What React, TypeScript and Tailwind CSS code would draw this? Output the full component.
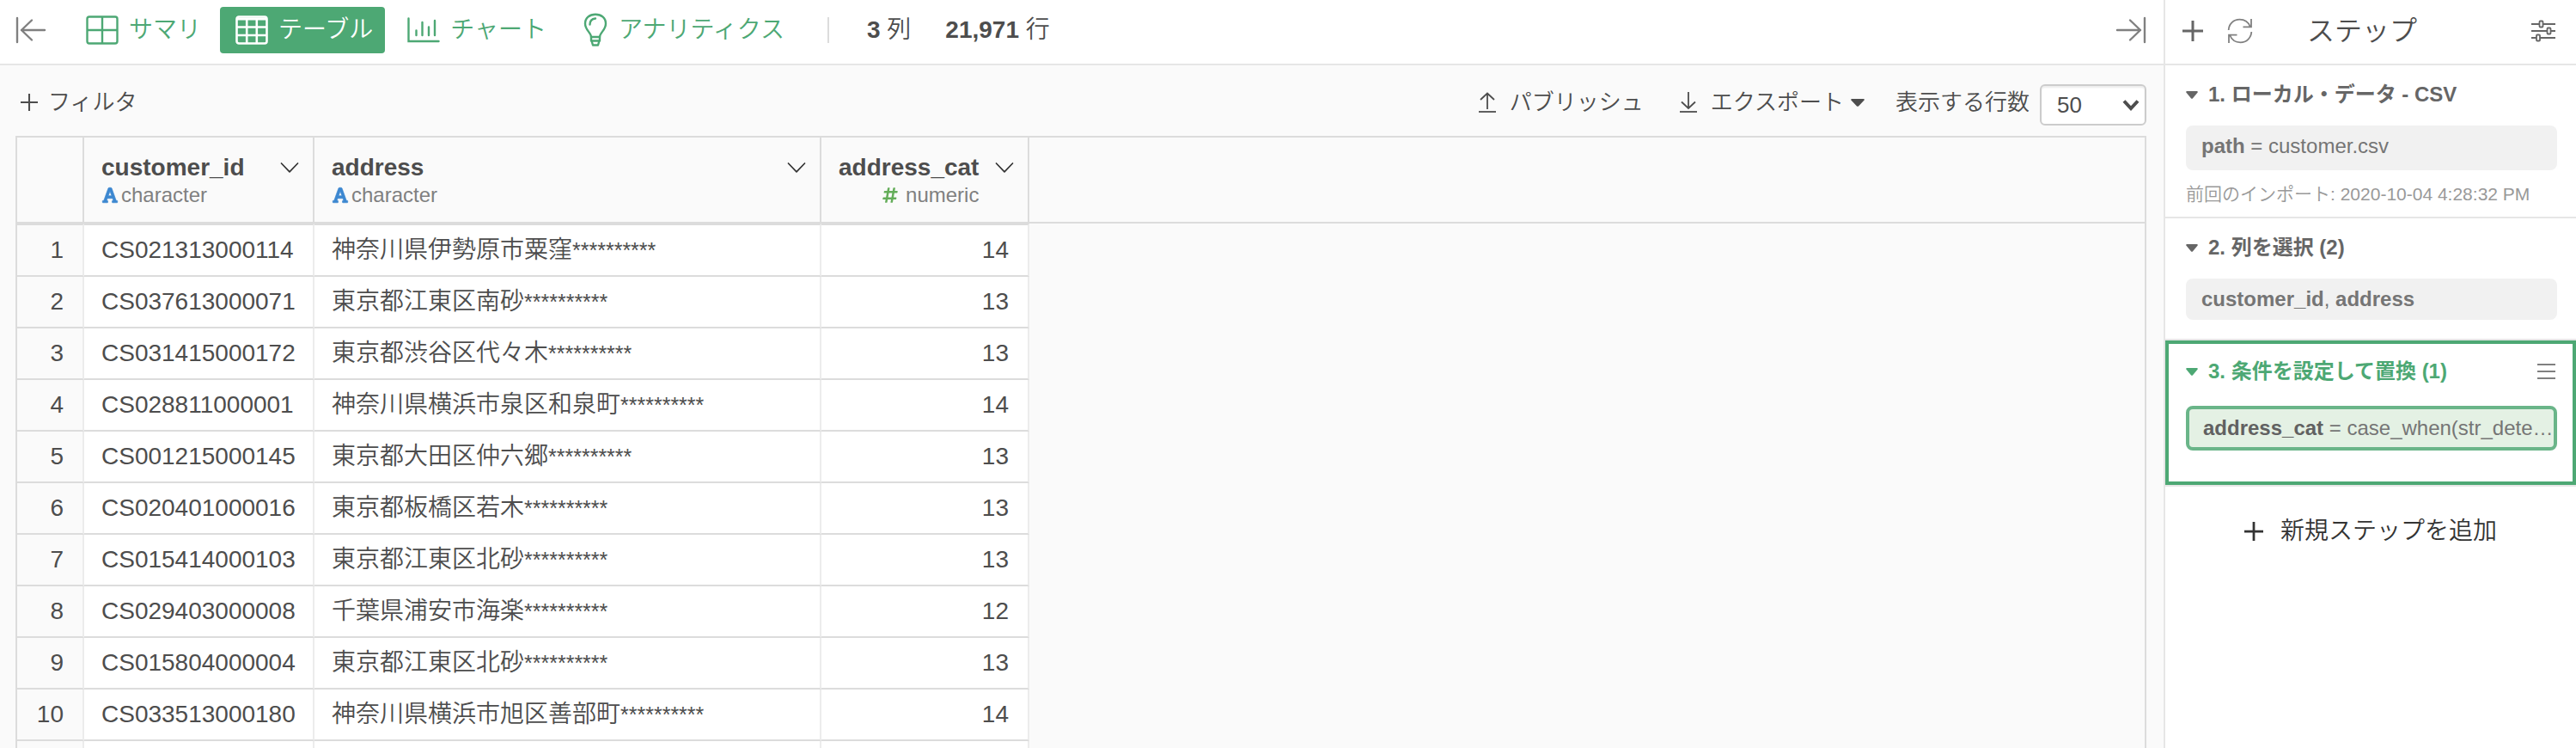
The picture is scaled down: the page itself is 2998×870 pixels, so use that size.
import type { ReactNode } from 'react';
import { FaFont, FaHashtag } from 'react-icons/fa';

type Row = { id: string; address: string; cat: number };

const MASK = '**********';

const rows: Row[] = [
  { id: 'CS021313000114', address: '神奈川県伊勢原市粟窪', cat: 14 },
  { id: 'CS037613000071', address: '東京都江東区南砂', cat: 13 },
  { id: 'CS031415000172', address: '東京都渋谷区代々木', cat: 13 },
  { id: 'CS028811000001', address: '神奈川県横浜市泉区和泉町', cat: 14 },
  { id: 'CS001215000145', address: '東京都大田区仲六郷', cat: 13 },
  { id: 'CS020401000016', address: '東京都板橋区若木', cat: 13 },
  { id: 'CS015414000103', address: '東京都江東区北砂', cat: 13 },
  { id: 'CS029403000008', address: '千葉県浦安市海楽', cat: 12 },
  { id: 'CS015804000004', address: '東京都江東区北砂', cat: 13 },
  { id: 'CS033513000180', address: '神奈川県横浜市旭区善部町', cat: 14 },
];

function CollapseIcon({ flip = false }: { flip?: boolean }) {
  return (
    <svg
      width="36"
      height="32"
      viewBox="0 0 36 32"
      fill="none"
      stroke="#808080"
      strokeWidth="2.4"
      strokeLinecap="round"
      strokeLinejoin="round"
      className={flip ? 'rotate-180' : ''}
      aria-hidden="true"
    >
      <path d="M2 2v28M7 16h27M19 4.500L7 16l12 11.500" />
    </svg>
  );
}

function SummaryIcon() {
  return (
    <svg width="38" height="34" viewBox="0 0 38 34" fill="none" stroke="currentColor" strokeWidth="2.400" aria-hidden="true">
      <rect x="1.500" y="1.500" width="35" height="31" rx="2.500" />
      <path d="M19 1.500v31M1.500 17h35" />
    </svg>
  );
}

function TableIcon() {
  return (
    <svg width="38" height="34" viewBox="0 0 38 34" fill="none" stroke="currentColor" strokeWidth="2.600" aria-hidden="true">
      <rect x="1.500" y="1.500" width="35" height="31" rx="2.500" />
      <path d="M1.500 4h35" strokeWidth="3" />
      <path d="M13.200 4v29M24.800 4v29M1.500 13.500h35M1.500 23h35" />
    </svg>
  );
}

function ChartIcon() {
  return (
    <svg width="38" height="30" viewBox="0 0 38 30" fill="none" stroke="currentColor" strokeWidth="2.400" strokeLinecap="round" aria-hidden="true">
      <path d="M1.500 1.500v26.500h35M10.500 15.500v5.500M17.500 6v15M25 11.500v9.500M32 4v17" />
    </svg>
  );
}

function BulbIcon() {
  return (
    <svg width="32" height="40" viewBox="0 0 32 40" fill="none" stroke="currentColor" strokeWidth="2.400" strokeLinejoin="round" strokeLinecap="round" aria-hidden="true">
      <path d="M12 28c0-5-7-8-7-15.500C5 6 10 1.700 17 1.700S29 6 29 12.500C29 20 22 23 22 28z" />
      <path d="M12 28v4.500h10V28M12.500 32.500l1.500 5h6l1.500-5M10.500 13.500c0-4 2.500-6.500 6.500-7" />
    </svg>
  );
}

function PlusIcon({ size, weight }: { size: number; weight: number }) {
  return (
    <svg width={size} height={size} viewBox="0 0 24 24" fill="none" stroke="currentColor" strokeWidth={weight} aria-hidden="true">
      <path d="M12 0v24M0 12h24" />
    </svg>
  );
}

function ArrowIcon({ down = false }: { down?: boolean }) {
  return (
    <svg width="20" height="24" viewBox="0 0 20 24" fill="none" stroke="currentColor" strokeWidth="1.800" aria-hidden="true">
      {down ? <path d="M10 0v19M2 11.500l8 7.500 8-7.500" /> : <path d="M10 20V1.500M2 9l8-7.500L18 9" />}
      <path d="M0 23h20" />
    </svg>
  );
}

function Caret({ width }: { width: number }) {
  return (
    <svg width={width} height="9" viewBox="0 0 16 9" preserveAspectRatio="none" fill="currentColor" aria-hidden="true">
      <path d="M1.300 0h13.400c1 0 1.400 1 .7 1.800L9 8.400c-.6.600-1.400.6-2 0L.6 1.800C-.1 1 .3 0 1.300 0z" />
    </svg>
  );
}

function ChevronIcon() {
  return (
    <svg width="22" height="12" viewBox="0 0 22 12" fill="none" stroke="#333333" strokeWidth="1.700" strokeLinecap="round" strokeLinejoin="round" aria-hidden="true">
      <path d="M1.500 1L11 10.800 20.500 1" />
    </svg>
  );
}

function RefreshIcon() {
  return (
    <svg width="30" height="30" viewBox="0 0 30 30" fill="none" stroke="#808080" strokeWidth="1.800" aria-hidden="true">
      <path d="M1.700 14C2 7 7.500 1.700 14.500 1.700c5.500 0 10.300 3.300 12.300 8.300M28 1v9.300h-9.500M28.300 16C28 23 22.500 28.300 15.500 28.300 10 28.300 5.200 25 3.200 20M2 29v-9.300h9.500" />
    </svg>
  );
}

function SlidersIcon() {
  return (
    <svg width="28" height="26" viewBox="0 0 28 26" fill="none" stroke="#666666" strokeWidth="1.800" aria-hidden="true">
      <path d="M0 5h9.500M13.500 5H28M0 13h18.500M22.500 13H28M0 21h6M10 21h18" />
      <rect x="9.500" y="1.500" width="4" height="7" rx="1" />
      <rect x="18.500" y="9.500" width="4" height="7" rx="1" />
      <rect x="6" y="17.500" width="4" height="7" rx="1" />
    </svg>
  );
}

function Tab({ icon, label, active = false }: { icon: ReactNode; label: string; active?: boolean }) {
  return (
    <button
      type="button"
      aria-pressed={active}
      className={
        active
          ? 'flex h-[54px] items-center gap-3 rounded bg-[#4da874] pr-3.5 pl-[18px] text-white'
          : 'flex h-[54px] items-center gap-3 rounded pr-3.5 pl-[18px] text-[#4da874]'
      }
    >
      {icon}
      <span>{label}</span>
    </button>
  );
}

function ColumnHeader({ name, type }: { name: string; type: 'character' | 'numeric' }) {
  const numeric = type === 'numeric';
  return (
    <th scope="col" className="border-r-2 border-b-2 border-[#dcdcdc] p-0 pt-0.5 font-normal">
      <div className="flex items-start justify-between pr-4 pl-5">
        <div className={numeric ? 'flex flex-col items-end gap-0.5' : 'flex flex-col items-start gap-0.5'}>
          <span className="text-[28px] leading-8 font-bold">{name}</span>
          <span className={numeric ? 'flex items-center gap-2 text-2xl leading-7 text-[#808080]' : 'flex items-center gap-[3px] text-2xl leading-7 text-[#808080]'}>
            {numeric ? (
              <FaHashtag className="size-5 text-[#64ad59]" />
            ) : (
              <FaFont className="size-5 stroke-[#3c87d0] stroke-[16px] text-[#3c87d0]" />
            )}
            {type}
          </span>
        </div>
        <button type="button" aria-label={`${name} のメニュー`} className="flex h-8 items-center">
          <ChevronIcon />
        </button>
      </div>
    </th>
  );
}

function DataTable() {
  return (
    <table className="w-full table-fixed border-separate border-spacing-0">
      <colgroup>
        <col className="w-[78px]" />
        <col className="w-[268px]" />
        <col className="w-[590px]" />
        <col className="w-[242px]" />
        <col />
      </colgroup>
      <thead>
        <tr className="h-[100px]">
          <td className="border-r-2 border-b-2 border-[#dcdcdc]" />
          <ColumnHeader name="customer_id" type="character" />
          <ColumnHeader name="address" type="character" />
          <ColumnHeader name="address_cat" type="numeric" />
          <td className="border-b-2 border-[#dcdcdc]" />
        </tr>
      </thead>
      <tbody className="[&>tr:first-child>*]:border-t-2 [&>tr:first-child]:h-[62px]">
        {rows.map((row, i) => (
          <tr key={row.id} className="h-[60px]">
            <th scope="row" className="border-r-2 border-b-2 border-[#dcdcdc] border-r-[#ececec] p-0 pr-[22px] text-right font-normal">
              {i + 1}
            </th>
            <td className="border-r-2 border-b-2 border-[#dcdcdc] border-r-[#ececec] bg-white p-0 pl-5">{row.id}</td>
            <td className="border-r-2 border-b-2 border-[#dcdcdc] border-r-[#ececec] bg-white p-0 pl-5">
              {row.address}
              <span className="text-[25px] leading-none">{MASK}</span>
            </td>
            <td className="border-r-2 border-b-2 border-[#dcdcdc] border-r-[#ececec] bg-white p-0 pr-[22px] text-right">{row.cat}</td>
            <td className="border-[#fafafa]" />
          </tr>
        ))}
        <tr className="h-[60px]">
          <td className="border-r-2 border-[#ececec]" />
          <td className="border-r-2 border-[#ececec] bg-white" />
          <td className="border-r-2 border-[#ececec] bg-white" />
          <td className="border-r-2 border-[#ececec] bg-white" />
          <td />
        </tr>
      </tbody>
    </table>
  );
}

function StepTitle({ children }: { children: ReactNode }) {
  return (
    <h3 className="flex h-9 items-center gap-3 font-bold">
      <Caret width={14} />
      <span>{children}</span>
    </h3>
  );
}

function StepsPanel() {
  return (
    <aside className="w-[480px] shrink-0 border-l-2 border-[#e6e6e6] bg-white text-2xl text-[#666666]">
      <header className="flex h-[76px] items-center border-b-2 border-[#e6e6e6] px-5 pb-0.5">
        <div className="flex flex-1 items-center gap-7">
          <button type="button" aria-label="追加">
            <PlusIcon size={24} weight={3} />
          </button>
          <button type="button" aria-label="更新">
            <RefreshIcon />
          </button>
        </div>
        <h2 className="mr-4 text-[32px] leading-10 text-[#4d4d4d]">ステップ</h2>
        <div className="flex flex-1 justify-end pr-1">
          <button type="button" aria-label="設定">
            <SlidersIcon />
          </button>
        </div>
      </header>

      <section className="border-b-2 border-[#e6e6e6] pt-4 pr-[22px] pb-3.5 pl-6">
        <StepTitle>1. ローカル・データ - CSV</StepTitle>
        <div className="mt-[18px] rounded-lg bg-[#f1f1f1] px-[18px] pt-2 pb-3 leading-8 text-[#757575]">
          <b className="font-bold">path</b> = customer.csv
        </div>
        <p className="mt-4 text-[21px] leading-6 text-[#999999]">前回のインポート: 2020-10-04 4:28:32 PM</p>
      </section>

      <section className="border-b-2 border-[#e6e6e6] pt-4 pr-[22px] pb-[22px] pl-6">
        <StepTitle>2. 列を選択 (2)</StepTitle>
        <div className="mt-[18px] rounded-lg bg-[#f1f1f1] px-[18px] py-2 leading-8 text-[#757575]">
          <b className="font-bold">customer_id</b>, <b className="font-bold">address</b>
        </div>
      </section>

      <section className="border-b-2 border-[#e6e6e6]">
        <div className="border-4 border-[#4da874] pt-3.5 pr-[18px] pb-9 pl-5">
          <div className="flex items-center justify-between text-[#4da874]">
            <StepTitle>3. 条件を設定して置換 (1)</StepTitle>
            <button type="button" aria-label="ステップのメニュー">
              <svg width="24" height="20" viewBox="0 0 24 20" stroke="#808080" strokeWidth="1.800" aria-hidden="true">
                <path d="M1 2h21M1 10h21M1 18h21" />
              </svg>
            </button>
          </div>
          <div className="mt-[22px] rounded-lg border-4 border-[#6ab589] bg-[#e4f1e4] py-1.5 pl-4 leading-8 whitespace-nowrap text-[#757575]">
            <b className="font-bold text-[#616161]">address_cat</b> = case_when(str_dete…
          </div>
        </div>
      </section>

      <button type="button" className="mt-8 flex w-full items-center justify-center gap-5 text-[28px] leading-10 text-[#333333]">
        <PlusIcon size={22} weight={3} />
        <span>新規ステップを追加</span>
      </button>
    </aside>
  );
}

export default function App() {
  return (
    <div className="flex h-screen overflow-hidden bg-[#fafafa] font-['Liberation_Sans','Noto_Sans_CJK_JP',sans-serif] text-[28px] leading-10 font-[350] text-[#4d4d4d]">
      <main className="flex min-w-0 flex-1 flex-col">
        <header className="flex h-[76px] shrink-0 items-center border-b-2 border-[#e6e6e6] bg-white pr-5 pb-1 pl-[18px]">
          <button type="button" aria-label="左パネルを閉じる">
            <CollapseIcon />
          </button>
          <nav className="ml-7 flex items-center gap-2">
            <Tab icon={<SummaryIcon />} label="サマリ" />
            <Tab icon={<TableIcon />} label="テーブル" active />
            <Tab icon={<ChartIcon />} label="チャート" />
            <Tab icon={<BulbIcon />} label="アナリティクス" />
          </nav>
          <div className="ml-9 h-[30px] w-0.5 bg-[#dcdcdc]" />
          <div className="ml-11 flex gap-10">
            <span>
              <b className="font-bold">3</b> 列
            </span>
            <span>
              <b className="font-bold">21,971</b> 行
            </span>
          </div>
          <button type="button" aria-label="右パネルを閉じる" className="ml-auto">
            <CollapseIcon flip />
          </button>
        </header>

        <div className="flex h-[82px] shrink-0 items-center pt-1 pr-5 pl-6 text-[26px]">
          <button type="button" className="flex items-center gap-3">
            <PlusIcon size={20} weight={2.5} />
            <span>フィルタ</span>
          </button>
          <button type="button" className="ml-auto flex items-center gap-4">
            <ArrowIcon />
            <span>パブリッシュ</span>
          </button>
          <button type="button" className="ml-[42px] flex items-center gap-4">
            <ArrowIcon down />
            <span className="flex items-center gap-2">
              エクスポート
              <Caret width={16} />
            </span>
          </button>
          <label htmlFor="row-count" className="ml-9">
            表示する行数
          </label>
          <div className="mt-1.5 ml-3 grid h-12 w-[124px] items-center">
            <select
              id="row-count"
              defaultValue="50"
              className="col-start-1 row-start-1 h-12 w-full appearance-none rounded-md border-2 border-[#cccccc] bg-white pl-[18px] shadow-[inset_0_2px_2px_rgba(0,0,0,0.08)]"
            >
              <option>50</option>
              <option>100</option>
            </select>
            <svg
              width="20"
              height="14"
              viewBox="0 0 20 14"
              fill="none"
              stroke="#4d4d4d"
              strokeWidth="4"
              className="pointer-events-none col-start-1 row-start-1 mr-2 justify-self-end"
              aria-hidden="true"
            >
              <path d="M2 2.500l8 8.500 8-8.500" />
            </svg>
          </div>
        </div>

        <div className="mr-5 ml-[18px] min-h-0 flex-1 overflow-hidden border-2 border-b-0 border-[#dcdcdc]">
          <DataTable />
        </div>
      </main>
      <StepsPanel />
    </div>
  );
}
